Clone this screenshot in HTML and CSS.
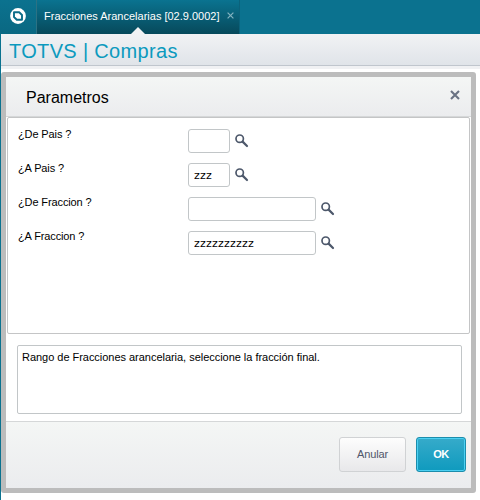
FILE: index.html
```html
<!DOCTYPE html>
<html lang="es">
<head>
  <meta charset="UTF-8">
  <meta name="viewport" content="width=device-width, initial-scale=1.0">
  <title>TOTVS | Compras</title>
  <link rel="stylesheet" href="styles.css">
</head>
<body>

<svg width="0" height="0" class="defs">
  <symbol id="search" viewBox="0 0 14 14">
    <circle cx="4.7" cy="4.7" r="3.7" fill="none" stroke="#4d586b" stroke-width="1.7"/>
    <path d="M7.6 7.6 L12 12" stroke="#4d586b" stroke-width="2.2" stroke-linecap="round"/>
  </symbol>
</svg>

<div class="topbar">
  <div class="logo">
    <svg width="16" height="16" viewBox="0 0 16 16">
      <circle cx="8" cy="8" r="7.9" fill="#fff"/>
      <path d="M4 4.3 H9.2 L12 7 V11.7 H6.8 L4 9 Z" fill="#fff" stroke="#0b6c88" stroke-width="1.9" stroke-linejoin="round"/>
    </svg>
  </div>
  <div class="tab">
    <span class="tab-title">Fracciones Arancelarias [02.9.0002]</span>
    <svg class="tab-close" width="7" height="7" viewBox="0 0 7 7"><path d="M.6 .6 L6.4 6.4 M6.4 .6 L.6 6.4" stroke="#83b3c1" stroke-width="1.2"/></svg>
    <svg class="tab-arrow" width="14" height="7" viewBox="0 0 14 7"><path d="M0 7 L7 0 L14 7 Z" fill="#f1f2f4"/></svg>
  </div>
</div>

<div class="page">
  <div class="module"><span class="module-title">TOTVS | Compras</span></div>

  <div class="dialog">
    <div class="dialog-header">
      <span class="dialog-title">Parametros</span>
      <svg width="10" height="10" viewBox="0 0 10 10"><path d="M1 1 L9 9 M9 1 L1 9" stroke="#6a7283" stroke-width="2.1"/></svg>
    </div>
    <div class="params">
      <div class="row">
        <label class="label">¿De Pais ?</label>
        <input class="field short" type="text" value="">
        <svg class="lookup" width="14" height="14"><use href="#search"/></svg>
      </div>
      <div class="row">
        <label class="label">¿A Pais ?</label>
        <input class="field short" type="text" value="zzz">
        <svg class="lookup" width="14" height="14"><use href="#search"/></svg>
      </div>
      <div class="row">
        <label class="label">¿De Fraccion ?</label>
        <input class="field" type="text" value="">
        <svg class="lookup" width="14" height="14"><use href="#search"/></svg>
      </div>
      <div class="row">
        <label class="label">¿A Fraccion ?</label>
        <input class="field" type="text" value="zzzzzzzzzz">
        <svg class="lookup" width="14" height="14"><use href="#search"/></svg>
      </div>
    </div>
    <div class="help"><span class="help-text">Rango de Fracciones arancelaria, seleccione la fracción final.</span></div>
    <div class="dialog-footer">
      <button class="btn">Anular</button>
      <button class="btn primary">OK</button>
    </div>
  </div>
</div>

</body>
</html>
```

FILE: styles.css
```css
* {
  box-sizing: border-box;
}
body {
  margin: 0;
  height: 500px;
  overflow: hidden;
  background-color: #fff;
  font-family: 'Liberation Sans', Arial, sans-serif;
  font-size: 11px;
  color: #000;
}
.defs {
  position: absolute;
}
.topbar {
  display: flex;
  height: 34px;
  background-color: #0b728f;
}
.logo {
  width: 37px;
  padding: 8px 0 0 10px;
  border-right: 1px solid #2c7284;
  background: linear-gradient(#0b728f, #0a6882);
}
.tab {
  position: relative;
  display: flex;
  width: 203px;
  padding: 10px 0 0 7px;
  background: linear-gradient(#0a7390, #07495b);
  border-right: 1px solid #0b627b;
  color: #fff;
}
.tab-title {
  width: 183px;
  line-height: 13px;
  white-space: nowrap;
}
.tab-close {
  margin-top: 2px;
}
.tab-arrow {
  position: absolute;
  left: 94px;
  bottom: 0;
}
.page {
  height: 466px;
  border-left: 1px solid #0b728f;
}
.module {
  height: 35px;
  padding-left: 8px;
  background: linear-gradient(#f1f2f4, #e0e4e9 31px, #c0c6cd 31px, #c0c6cd 32px, #f0f1f3 32px);
}
.module-title {
  font-size: 20px;
  line-height: 34px;
  letter-spacing: 0.34px;
  color: #0c9abe;
}
.dialog {
  width: 475px;
  height: 421px;
  margin-top: 3px;
  border: 5px solid #bcbcbc;
  border-radius: 3px;
  background-color: #fff;
}
.dialog-header {
  display: flex;
  justify-content: space-between;
  height: 40px;
  padding: 13px 11px 0 20px;
  background: linear-gradient(#f4f6f5, #ebecee);
  border-bottom: 1px solid #d5d7d8;
}
.dialog-title {
  font-size: 16px;
  line-height: 16px;
}
.params {
  height: 217px;
  margin: 0 1px;
  padding: 11px 0 0 10px;
  border: 1px solid #c4c5c6;
  border-radius: 2px;
}
.row {
  display: flex;
  height: 34px;
}
.label {
  width: 170px;
  line-height: 10px;
  letter-spacing: -0.12px;
}
.field {
  width: 128px;
  height: 24px;
  margin: 0;
  padding: 1px 5px 0;
  border: 1px solid #c2c6c8;
  border-radius: 3px;
  background-color: #fff;
  font-family: 'DejaVu Sans', sans-serif;
  font-size: 11px;
  letter-spacing: 0.22px;
}
.field.short {
  width: 42px;
}
.lookup {
  margin: 5px 0 0 5px;
}
.help {
  width: 445px;
  height: 69px;
  margin: 11px 0 0 11px;
  padding: 5px 4px;
  border: 1px solid #c2c6c8;
  border-radius: 2px;
  line-height: 13px;
  letter-spacing: -0.03px;
  white-space: nowrap;
}
.dialog-footer {
  display: flex;
  justify-content: flex-end;
  gap: 10px;
  height: 67px;
  margin-top: 7px;
  padding: 15px 5px 0 0;
  background: linear-gradient(#f4f6f5, #ebecee);
  border-top: 1px solid #d5d7d8;
}
.btn {
  width: 67px;
  height: 35px;
  padding: 0 0 1px;
  border: 1px solid #d0d2d4;
  border-radius: 3px;
  background: linear-gradient(#fdfdfd, #e8e8ea);
  font-family: 'Liberation Sans', Arial, sans-serif;
  font-size: 11px;
  letter-spacing: -0.1px;
  color: #50576a;
}
.btn.primary {
  width: 50px;
  border-color: #1b8dac;
  background: linear-gradient(#36abca, #0f9abe);
  box-shadow: inset 0 0 0 1px #4cd0f2;
  font-weight: bold;
  letter-spacing: -0.5px;
  color: #fff;
}
```
